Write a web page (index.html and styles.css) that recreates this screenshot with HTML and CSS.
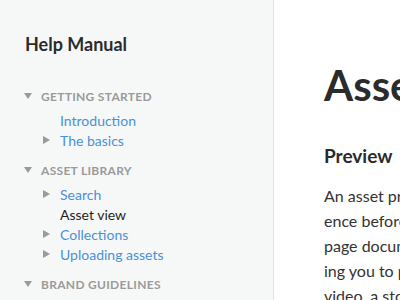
FILE: index.html
```html
<!DOCTYPE html>
<html>
<head>
<meta charset="utf-8">
<link rel="stylesheet" href="styles.css">
</head>
<body>
<div class="app">
  <aside class="sidebar">
    <h2 class="title">Help Manual</h2>
    <ul class="nav">
      <li class="section">
        <div class="section-head"><span class="tri-down"></span>Getting started</div>
        <ul class="items">
          <li class="item"><span class="slot"></span><a class="link">Introduction</a></li>
          <li class="item"><span class="slot"><span class="tri-right"></span></span><a class="link">The basics</a></li>
        </ul>
      </li>
      <li class="section">
        <div class="section-head"><span class="tri-down"></span>Asset library</div>
        <ul class="items">
          <li class="item"><span class="slot"><span class="tri-right"></span></span><a class="link">Search</a></li>
          <li class="item"><span class="slot"></span><span class="current">Asset view</span></li>
          <li class="item"><span class="slot"><span class="tri-right"></span></span><a class="link">Collections</a></li>
          <li class="item"><span class="slot"><span class="tri-right"></span></span><a class="link">Uploading assets</a></li>
        </ul>
      </li>
      <li class="section">
        <div class="section-head"><span class="tri-down"></span>Brand guidelines</div>
      </li>
    </ul>
  </aside>
  <main class="content">
    <h1 class="page-title">Asset view</h1>
    <h3 class="sub">Preview</h3>
    <p class="para">An asset preview gives you a quick refer-<br>ence before opening the full asset detail<br>page documenting its usage and allow-<br>ing you to play an audio file or watch a<br>video, a storyboard or a slideshow.</p>
  </main>
</div>
</body>
</html>
```
FILE: styles.css
```css
html, body {
  margin: 0;
  padding: 0;
  background: #ffffff;
}
body {
  font-family: Lato, "Open Sans", sans-serif;
  width: 400px;
  height: 300px;
  overflow: hidden;
}
.app {
  display: flex;
  height: 300px;
}
.sidebar {
  width: 274px;
  flex: 0 0 274px;
  background: #f6f8f8;
  border-right: 1px solid #e2e5e5;
  padding: 34px 0 0 25px;
  box-sizing: border-box;
}
.title {
  margin: 0 0 32px;
  font-size: 18px;
  line-height: 20px;
  font-weight: 700;
  color: #2b2b2b;
}
.nav, .items {
  list-style: none;
  margin: 0;
  padding: 0;
}
.section {
  margin-bottom: 10px;
}
.section-head {
  display: flex;
  align-items: center;
  height: 20px;
  font-size: 12px;
  font-weight: 700;
  text-transform: uppercase;
  color: #9a9a9a;
  letter-spacing: 0.3px;
}
.tri-down {
  width: 0;
  height: 0;
  border-left: 4.5px solid transparent;
  border-right: 4.5px solid transparent;
  border-top: 6px solid #9a9a9a;
  margin-right: 9px;
  margin-left: -1px;
}
.items {
  margin-top: 4px;
  padding-left: 18px;
}
.item {
  display: flex;
  align-items: center;
  height: 20px;
  font-size: 14px;
}
.slot {
  width: 17px;
  display: flex;
  align-items: center;
}
.tri-right {
  width: 0;
  height: 0;
  border-top: 4px solid transparent;
  border-bottom: 4px solid transparent;
  border-left: 7px solid #9a9a9a;
}
.link {
  color: #4a90d9;
}
.current {
  color: #1f1f1f;
}
.content {
  flex: 1;
  padding: 0 0 0 50px;
  overflow: hidden;
  white-space: nowrap;
}
.page-title {
  margin: 60px 0 0;
  font-size: 42px;
  line-height: 50px;
  font-weight: 700;
  color: #2b2b2b;
}
.sub {
  margin: 34px 0 0;
  font-size: 19px;
  line-height: 24px;
  font-weight: 700;
  color: #2b2b2b;
}
.para {
  margin: 15px 0 0;
  font-size: 16px;
  line-height: 25px;
  color: #333333;
}
```
